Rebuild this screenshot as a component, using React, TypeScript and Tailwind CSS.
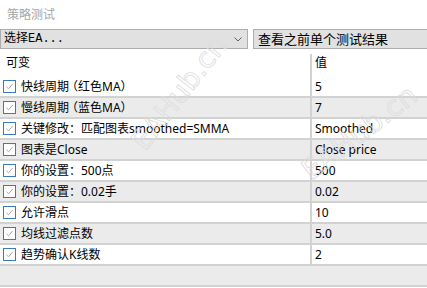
import React from "react";

const rows: { label: string; value: string }[] = [
  { label: "快线周期（红色MA）", value: "5" },
  { label: "慢线周期（蓝色MA）", value: "7" },
  { label: "关键修改：匹配图表smoothed=SMMA", value: "Smoothed" },
  { label: "图表是Close", value: "Close price" },
  { label: "你的设置：500点", value: "500" },
  { label: "你的设置：0.02手", value: "0.02" },
  { label: "允许滑点", value: "10" },
  { label: "均线过滤点数", value: "5.0" },
  { label: "趋势确认K线数", value: "2" },
];

function Check() {
  return (
    <div className="w-[13px] h-[13px] border border-[#3d7ab8] bg-white flex items-center justify-center shrink-0">
      <svg width="9" height="9" viewBox="0 0 9 9">
        <path d="M1.5 4.8 L3.6 6.8 L7.6 2" fill="none" stroke="#a8a8a8" strokeWidth="1" />
      </svg>
    </div>
  );
}

function Label({ text }: { text: string }) {
  const parts = text.split(/([（）])/);
  return (
    <span>
      {parts.map((p, i) =>
        p === "（" ? (
          <span key={i} className="inline-block w-[9px]">
            <span className="inline-block -ml-[3px]">{p}</span>
          </span>
        ) : p === "）" ? (
          <span key={i} className="inline-block w-[8px]">
            <span className="inline-block">{p}</span>
          </span>
        ) : (
          <React.Fragment key={i}>{p}</React.Fragment>
        )
      )}
    </span>
  );
}

export default function App() {
  return (
    <div
      className="relative w-[427px] h-[288px] bg-white overflow-hidden text-black"
      style={{ fontFamily: '"Noto Sans", "Noto Sans CJK SC", sans-serif' }}
    >
      <div className="h-[29px] pl-[7px] flex items-center text-[12px] text-[#a6a6a6]">策略测试</div>
      <div className="h-[20px] flex gap-[5px]">
        <div className="w-[248px] h-full border border-[#adadad] bg-[#e1e1e1] flex items-center justify-between pl-[3px] pr-[5px]">
          <span
            className="text-[12px] leading-none"
            style={{ fontFamily: '"Liberation Mono", "Noto Sans CJK SC", monospace' }}
          >
            选择EA...
          </span>
          <svg width="8" height="5" viewBox="0 0 8 5">
            <path d="M0.5 0.5 L4 4 L7.5 0.5" fill="none" stroke="#606060" strokeWidth="1" />
          </svg>
        </div>
        <div className="flex-1 h-full border-y border-l border-[#adadad] bg-[#e1e1e1] flex items-center pl-[4px] text-[13px] leading-none">
          查看之前单个测试结果
        </div>
      </div>
      <div className="h-[28px] flex text-[12px]">
        <div className="w-[310px] pl-[6px] flex items-center">可变</div>
        <div className="flex-1 mt-[5px] border-l-2 border-[#d2d2d2] pl-[3px] flex items-center pb-[5px]">值</div>
      </div>
      <div className="flex flex-col">
        {rows.map((r, i) => (
          <div
            key={i}
            className={`h-[21px] flex border-b-2 border-[#d2d2d2] text-[12px] ${i % 2 === 1 ? "bg-[#ebebeb]" : "bg-white"}`}
          >
            <div className="w-[310px] flex items-center pl-[3px] gap-[5px] whitespace-nowrap overflow-hidden">
              <Check />
              <Label text={r.label} />
            </div>
            <div className="flex-1 border-l-2 border-[#d2d2d2] pl-[3px] flex items-center">{r.value}</div>
          </div>
        ))}
        <div className="h-[21px] bg-[#ebebeb] border-b-2 border-[#d2d2d2]" />
      </div>
      <span
        aria-hidden="true"
        className="absolute left-[112px] top-[72px] text-[28px] text-transparent [-webkit-text-stroke:0.8px_#dcdcdc] -rotate-[52deg] pointer-events-none whitespace-nowrap select-none"
        style={{ fontFamily: '"DejaVu Sans", sans-serif' }}
      >
        EAHub.cn
      </span>
      <span
        aria-hidden="true"
        className="absolute left-[292px] top-[112px] text-[28px] text-transparent [-webkit-text-stroke:0.8px_#dcdcdc] -rotate-[37deg] pointer-events-none whitespace-nowrap select-none"
        style={{ fontFamily: '"DejaVu Sans", sans-serif' }}
      >
        EAHub.cn
      </span>
    </div>
  );
}
